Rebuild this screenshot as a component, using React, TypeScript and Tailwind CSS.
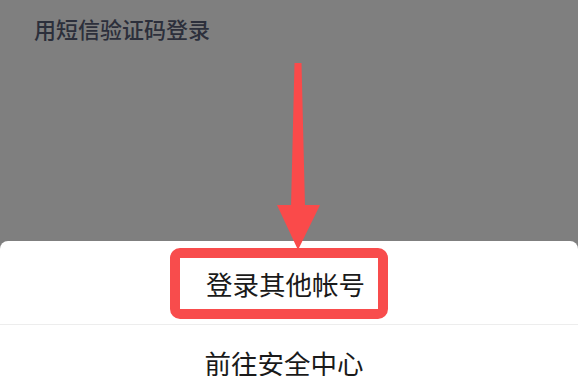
import React from "react";

const cjk = { fontFamily: '"Noto Sans CJK SC", "Noto Sans", sans-serif' };

export default function App() {
  return (
    <div className="relative w-full h-[376px] overflow-hidden bg-[#7f7f7f] flex flex-col" style={cjk}>
      <div className="h-[241px] shrink-0 pl-[34px] pt-[17px]">
        <div className="text-[22px] leading-[22px] font-medium text-[#2c2f3b]">用短信验证码登录</div>
      </div>
      <div className="flex-1 bg-white rounded-t-[8px] flex flex-col">
        <div className="h-[84px] shrink-0 border-b border-[#ededed] pt-[7px] pl-[170px] flex items-start">
          <div className="w-[218px] h-[71px] border-[10px] border-[#f84c4c] rounded-[10px] flex items-center pl-[26px]">
            <span className="text-[26.5px] leading-[26px] text-[#1a1a1a]">登录其他帐号</span>
          </div>
        </div>
        <div className="pt-[25px] flex justify-center pr-[10px]">
          <span className="text-[26.5px] leading-[26px] text-[#1a1a1a]">前往安全中心</span>
        </div>
      </div>
      <svg className="absolute inset-0 pointer-events-none" width="578" height="376" viewBox="0 0 578 376">
        <polygon points="294.5,63 301.5,63 305,207 291,207" fill="#fa4a4a" />
        <polygon points="277,205 320,205 298,250" fill="#fa4a4a" />
      </svg>
    </div>
  );
}
